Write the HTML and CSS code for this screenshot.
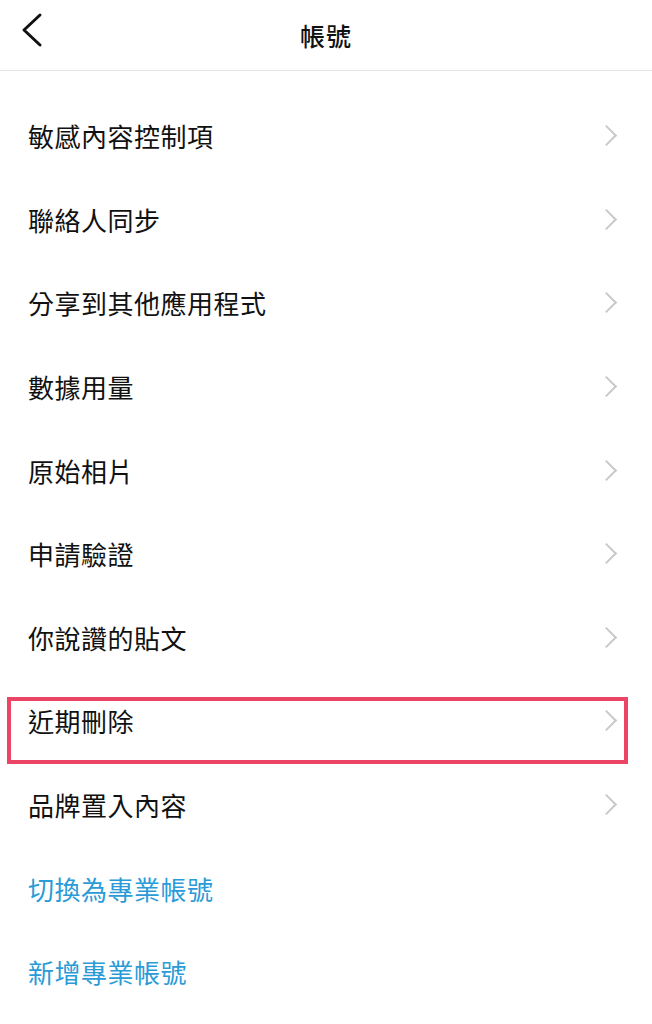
FILE: index.html
```html
<!doctype html>
<html lang="zh-Hant">
    <head>
        <meta charset="UTF-8" />
        <meta name="viewport" content="width=device-width, initial-scale=1.0" />
        <title>帳號</title>
        <link rel="stylesheet" href="styles.css">
    </head>
    <body>
        <div class="header">
            <svg class="back" width="26" height="36" viewBox="0 0 26 36">
                <path d="M22 3 L6 18 L22 33" fill="none" stroke="#111" stroke-width="3" stroke-linecap="round" stroke-linejoin="round" />
            </svg>
            <h1>帳號</h1>
        </div>

        <ul class="menu">
            <li class="row"><span>敏感內容控制項</span><i class="arrow"></i></li>
            <li class="row"><span>聯絡人同步</span><i class="arrow"></i></li>
            <li class="row"><span>分享到其他應用程式</span><i class="arrow"></i></li>
            <li class="row"><span>數據用量</span><i class="arrow"></i></li>
            <li class="row"><span>原始相片</span><i class="arrow"></i></li>
            <li class="row"><span>申請驗證</span><i class="arrow"></i></li>
            <li class="row"><span>你說讚的貼文</span><i class="arrow"></i></li>
            <li class="row marked"><span>近期刪除</span><i class="arrow"></i><div class="highlight"></div></li>
            <li class="row"><span>品牌置入內容</span><i class="arrow"></i></li>
            <li class="row link"><span>切換為專業帳號</span></li>
            <li class="row link"><span>新增專業帳號</span></li>
        </ul>
    </body>
</html>
```

FILE: styles.css
```css
body {
    font-family: "Noto Sans CJK TC", "Noto Sans", sans-serif;
    background-color: #fff;
    color: #111;
    margin: 0;
}
.header {
    position: relative;
    height: 70px;
    border-bottom: 1px solid #e4e4e4;
    display: flex;
    align-items: center;
    justify-content: center;
}
.header .back {
    position: absolute;
    left: 18px;
    top: 12px;
}
.header h1 {
    margin: 0;
    font-size: 25px;
    font-weight: 500;
    letter-spacing: 1px;
}
.menu {
    list-style: none;
    margin: 0;
    padding: 23px 0 0 0;
}
.row {
    position: relative;
    height: 83.6px;
    display: flex;
    align-items: center;
    justify-content: space-between;
    padding: 0 38px 0 28px;
    font-size: 26px;
    letter-spacing: 0.5px;
}
.arrow {
    width: 13px;
    height: 13px;
    border-top: 2px solid #c9c9c9;
    border-right: 2px solid #c9c9c9;
    transform: rotate(45deg);
}
.link {
    color: #2a9bd6;
}
.highlight {
    position: absolute;
    left: 7px;
    right: 24px;
    top: 18px;
    height: 67px;
    border: 4px solid #ec4464;
    box-sizing: border-box;
}
```
